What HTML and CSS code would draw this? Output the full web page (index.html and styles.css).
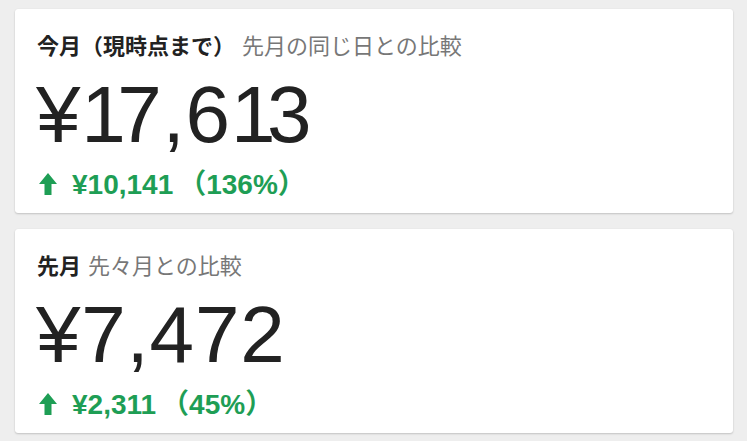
FILE: index.html
```html
<!DOCTYPE html>
<html lang="ja">
<head>
<meta charset="utf-8">
<link rel="stylesheet" href="styles.css">
</head>
<body>
<div class="stack">
  <section class="card">
    <div class="title"><span class="main">今月（現時点まで）</span><span class="sub">先月の同じ日との比較</span></div>
    <div class="amount">¥<span class="one">1</span>7,6<span class="one">1</span>3</div>
    <div class="delta"><svg class="arrow" viewBox="0 0 18 22" width="18" height="22"><path d="M9 0 L18 11 L12.5 11 L12.5 22 L5.5 22 L5.5 11 L0 11 Z" fill="currentColor"/></svg><span>¥10,141</span><span class="pct">（136%）</span></div>
  </section>
  <section class="card">
    <div class="title"><span class="main">先月</span><span class="sub">先々月との比較</span></div>
    <div class="amount">¥7,472</div>
    <div class="delta"><svg class="arrow" viewBox="0 0 18 22" width="18" height="22"><path d="M9 0 L18 11 L12.5 11 L12.5 22 L5.5 22 L5.5 11 L0 11 Z" fill="currentColor"/></svg><span>¥2,311</span><span class="pct">（45%）</span></div>
  </section>
</div>
</body>
</html>
```
FILE: styles.css
```css
html, body {
  margin: 0;
  padding: 0;
  background: #eeeeee;
}
body {
  font-family: "Liberation Sans", "Noto Sans CJK JP", sans-serif;
  width: 747px;
  height: 441px;
  overflow: hidden;
}
.stack {
  display: flex;
  flex-direction: column;
  gap: 16px;
  padding: 9px 14px 0 15px;
}
.card {
  background: #ffffff;
  border-radius: 3px;
  box-shadow: 0 1px 2px rgba(0,0,0,0.18), 0 0 1px rgba(0,0,0,0.08);
  height: 204px;
  box-sizing: border-box;
  padding: 23px 22px 0 22px;
}
.title {
  font-size: 22px;
  line-height: 30px;
  height: 30px;
  white-space: nowrap;
}
.title .main {
  font-weight: bold;
  color: #222222;
  margin-right: 7px;
}
.title .sub {
  color: #777777;
}
.amount {
  font-size: 80px;
  line-height: 90px;
  height: 90px;
  color: #222222;
  margin-left: -1px;
  margin-top: 8px;
  letter-spacing: 0.8px;
}
.amount .one {
  letter-spacing: -8.5px;
}
.delta {
  display: flex;
  align-items: center;
  gap: 15px;
  color: #1e9e55;
  font-weight: bold;
  font-size: 28px;
  line-height: 32px;
  margin-top: 9px;
}
.arrow {
  margin-left: 2px;
  margin-top: -2px;
}
.pct {
  margin-left: -10px;
}
```
